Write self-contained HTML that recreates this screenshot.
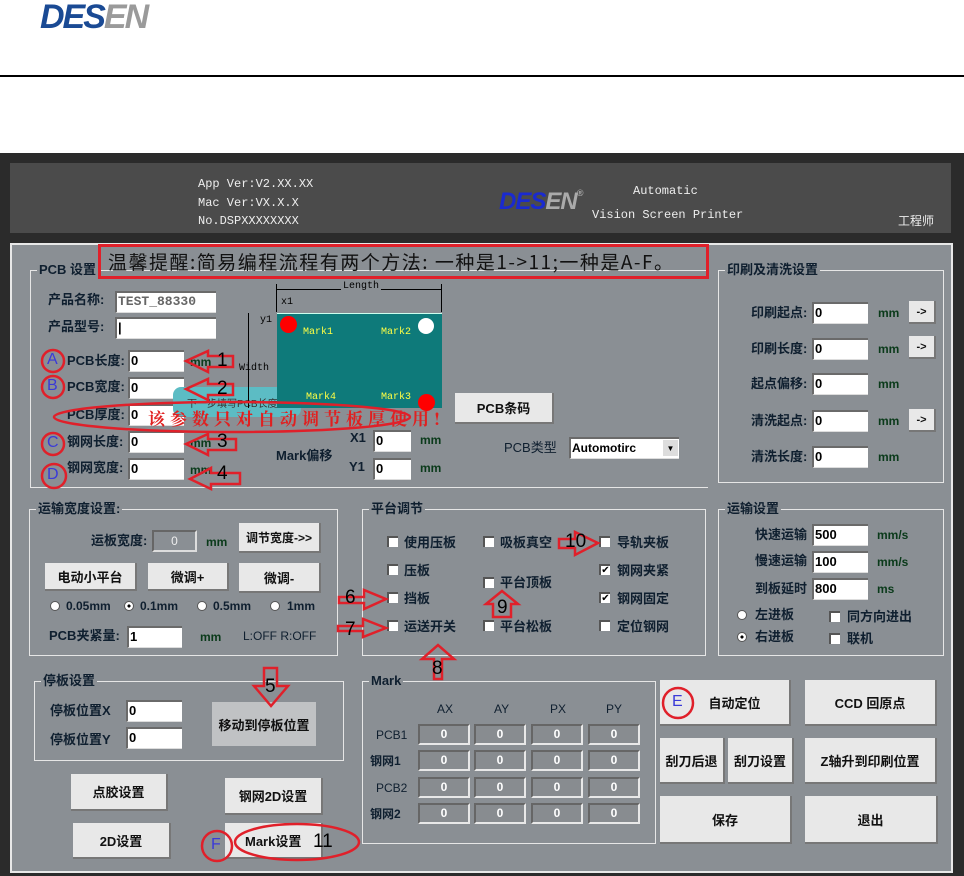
<!DOCTYPE html>
<html><head><meta charset="utf-8"><style>
*{margin:0;padding:0;box-sizing:border-box}
body{width:964px;height:876px;background:#fff;position:relative;overflow:hidden;font-family:"Liberation Sans","Noto Sans CJK SC",sans-serif}
.a{position:absolute;white-space:nowrap}
.l{position:absolute;white-space:nowrap;font-size:13px;font-weight:bold;color:#0f1f2f;line-height:16px}
.in{position:absolute;background:#fff;border-top:2px solid #6a6a6a;border-left:2px solid #6a6a6a;border-bottom:1px solid #ddd;font-size:13px;font-weight:bold;line-height:18px;padding-left:1px;color:#000}
.bt{position:absolute;background:#e8e8e8;border-right:2px solid #777;border-bottom:2px solid #777;font-size:13px;font-weight:bold;color:#111;display:flex;align-items:center;justify-content:center}
.g{position:absolute;border:1px solid #e6e6e6}
.gt{position:absolute;top:-9px;left:6px;background:#8a8f94;font-size:13px;font-weight:bold;color:#0f1f2f;padding:0 2px;line-height:16px}
.cb{position:absolute;width:11px;height:11px;background:#fff;border-top:2px solid #555;border-left:2px solid #555;font-size:10px;line-height:9px;text-align:center}
.rd{position:absolute;width:10px;height:10px;border-radius:50%;background:#fff;border:1px solid #555}
.mm{position:absolute;font-size:12px;font-weight:bold;color:#0a3a1a}
.cell{position:absolute;width:52px;height:21px;background:#888c90;border:2px solid #e8e8e8;border-top-color:#666;border-left-color:#666;text-align:center;font-size:12px;font-weight:bold;color:#fff;line-height:17px}
.mono{font-family:"Liberation Mono","Noto Sans CJK SC",monospace;color:#eee;font-size:12px}
.n{position:absolute;font-size:19px;color:#000}
</style></head><body>
<div class="a" style="left:40px;top:-2px;font:italic 900 34px 'Liberation Sans',sans-serif;letter-spacing:-2px;color:#1a4a94">DES<span style="color:#9a9a9a">EN</span></div>
<div class="a" style="left:0;top:75px;width:964px;height:2px;background:#000"></div>
<div class="a" style="left:0;top:153px;width:964px;height:723px;background:#2b2b2b"></div>
<div class="a" style="left:10px;top:163px;width:941px;height:70px;background:#4b4b4b"></div>
<div class="a mono" style="left:198px;top:175px;line-height:18.5px">App Ver:V2.XX.XX<br>Mac Ver:VX.X.X<br>No.DSPXXXXXXXX</div>
<div class="a" style="left:499px;top:188px;font:italic 900 24px 'Liberation Sans',sans-serif;letter-spacing:-1px;color:#1a2ad0">DES<span style="color:#aaa">EN</span><span style="font-size:9px;color:#aaa;vertical-align:top">®</span></div>
<div class="a mono" style="left:633px;top:184px">Automatic</div>
<div class="a mono" style="left:592px;top:208px">Vision Screen Printer</div>
<div class="a" style="left:898px;top:212px;color:#eee;font-size:12px">工程师</div>
<div class="a" style="left:10px;top:243px;width:943px;height:630px;background:#8a8f94;border:2px solid #e8e8e8"></div>

<div class="g" style="left:30px;top:270px;width:678px;height:218px;border-right:none"><div class="gt">PCB 设置</div></div>
<div class="l" style="left:48px;top:292px">产品名称:</div><div class="in" style="left:115px;top:291px;width:101px;height:22px;color:#666;font-family:'Liberation Mono',monospace">TEST_88330</div>
<div class="l" style="left:48px;top:319px">产品型号:</div><div class="in" style="left:115px;top:317px;width:101px;height:22px">|</div>
<div class="l" style="left:67px;top:353px">PCB长度:</div><div class="in" style="left:128px;top:350px;width:56px;height:22px">0</div>
<div class="l" style="left:67px;top:379px">PCB宽度:</div><div class="in" style="left:128px;top:377px;width:56px;height:22px">0</div>
<div class="l" style="left:67px;top:407px">PCB厚度:</div><div class="in" style="left:128px;top:404px;width:56px;height:22px">0</div>
<div class="l" style="left:67px;top:434px">钢网长度:</div><div class="in" style="left:128px;top:431px;width:56px;height:22px">0</div>
<div class="l" style="left:67px;top:460px">钢网宽度:</div><div class="in" style="left:128px;top:458px;width:56px;height:22px">0</div>
<div class="mm" style="left:190px;top:355px">mm</div><div class="mm" style="left:190px;top:436px">mm</div><div class="mm" style="left:190px;top:463px">mm</div>
<div class="a" style="left:173px;top:387px;width:128px;height:30px;background:#5cbcc4;border-radius:8px;font-size:10px;color:#333;padding:8px 0 0 14px">下一步填写PCB长度</div>
<div class="a" style="left:277px;top:313px;width:165px;height:95px;background:#0e7a7a;border-top:1px solid #cfe"></div>
<div class="a" style="left:276px;top:289px;width:166px;height:1px;background:#000"></div>
<div class="a" style="left:276px;top:284px;width:1px;height:28px;background:#000"></div>
<div class="a" style="left:441px;top:284px;width:1px;height:28px;background:#000"></div>
<div class="a" style="left:248px;top:313px;width:1px;height:95px;background:#000"></div>
<div class="a" style="left:341px;top:281px;background:#8a8f94;font-size:10px;font-family:'Liberation Mono',monospace;padding:0 2px">Length</div>
<div class="a" style="left:281px;top:297px;font-size:10px;font-family:'Liberation Mono',monospace">x1</div>
<div class="a" style="left:260px;top:315px;font-size:10px;font-family:'Liberation Mono',monospace">y1</div>
<div class="a" style="left:239px;top:363px;font-size:10px;font-family:'Liberation Mono',monospace">Width</div>
<div class="a" style="left:280px;top:316px;width:17px;height:17px;border-radius:50%;background:#f00"></div>
<div class="a" style="left:418px;top:318px;width:16px;height:16px;border-radius:50%;background:#fff"></div>
<div class="a" style="left:418px;top:394px;width:17px;height:17px;border-radius:50%;background:#f00"></div>
<div class="a" style="left:303px;top:327px;font-size:10px;color:#ff4;font-family:'Liberation Mono',monospace">Mark1</div>
<div class="a" style="left:381px;top:327px;font-size:10px;color:#ff4;font-family:'Liberation Mono',monospace">Mark2</div>
<div class="a" style="left:306px;top:392px;font-size:10px;color:#ff4;font-family:'Liberation Mono',monospace">Mark4</div>
<div class="a" style="left:381px;top:392px;font-size:10px;color:#ff4;font-family:'Liberation Mono',monospace">Mark3</div>
<div class="bt" style="left:455px;top:393px;width:99px;height:31px">PCB条码</div>
<div class="l" style="left:350px;top:430px">X1</div><div class="in" style="left:373px;top:430px;width:38px;height:22px">0</div><div class="mm" style="left:420px;top:433px">mm</div>
<div class="l" style="left:349px;top:459px">Y1</div><div class="in" style="left:373px;top:458px;width:38px;height:22px">0</div><div class="mm" style="left:420px;top:461px">mm</div>
<div class="l" style="left:276px;top:448px">Mark偏移</div>
<div class="l" style="left:504px;top:440px;font-weight:normal">PCB类型</div>
<div class="in" style="left:569px;top:437px;width:110px;height:22px;font-size:12px">Automotirc<span style="position:absolute;right:1px;top:1px;width:15px;height:16px;background:#ddd;font-size:8px;text-align:center">▼</span></div>

<div class="g" style="left:718px;top:270px;width:226px;height:213px"><div class="gt">印刷及清洗设置</div></div>
<div class="l" style="left:751px;top:305px">印刷起点:</div><div class="in" style="left:812px;top:302px;width:56px;height:22px">0</div><div class="mm" style="left:878px;top:306px">mm</div><div class="bt" style="left:909px;top:301px;width:27px;height:23px;font-size:11px">-&gt;</div>
<div class="l" style="left:751px;top:341px">印刷长度:</div><div class="in" style="left:812px;top:338px;width:56px;height:22px">0</div><div class="mm" style="left:878px;top:342px">mm</div><div class="bt" style="left:909px;top:336px;width:27px;height:23px;font-size:11px">-&gt;</div>
<div class="l" style="left:751px;top:376px">起点偏移:</div><div class="in" style="left:812px;top:373px;width:56px;height:22px">0</div><div class="mm" style="left:878px;top:377px">mm</div>
<div class="l" style="left:751px;top:413px">清洗起点:</div><div class="in" style="left:812px;top:410px;width:56px;height:22px">0</div><div class="mm" style="left:878px;top:414px">mm</div><div class="bt" style="left:909px;top:409px;width:27px;height:23px;font-size:11px">-&gt;</div>
<div class="l" style="left:751px;top:449px">清洗长度:</div><div class="in" style="left:812px;top:446px;width:56px;height:22px">0</div><div class="mm" style="left:878px;top:450px">mm</div>

<div class="g" style="left:29px;top:509px;width:309px;height:147px"><div class="gt">运输宽度设置:</div></div>
<div class="l" style="left:91px;top:533px">运板宽度:</div><div class="a" style="left:152px;top:530px;width:45px;height:22px;border:2px solid #ddd;border-top-color:#666;border-left-color:#666;color:#eee;font-size:12px;text-align:center;line-height:18px">0</div><div class="mm" style="left:206px;top:535px">mm</div>
<div class="bt" style="left:239px;top:523px;width:82px;height:30px;font-size:12px">调节宽度-&gt;&gt;</div>
<div class="bt" style="left:45px;top:563px;width:92px;height:28px">电动小平台</div>
<div class="bt" style="left:148px;top:563px;width:81px;height:28px">微调+</div>
<div class="bt" style="left:239px;top:563px;width:82px;height:30px">微调-</div>
<div class="rd" style="left:50px;top:601px"></div><div class="l" style="left:66px;top:598px;font-size:12px">0.05mm</div>
<div class="rd" style="left:124px;top:601px;background:radial-gradient(#000 25%,#fff 30%)"></div><div class="l" style="left:140px;top:598px;font-size:12px">0.1mm</div>
<div class="rd" style="left:197px;top:601px"></div><div class="l" style="left:213px;top:598px;font-size:12px">0.5mm</div>
<div class="rd" style="left:270px;top:601px"></div><div class="l" style="left:287px;top:598px;font-size:12px">1mm</div>
<div class="l" style="left:49px;top:628px">PCB夹紧量:</div><div class="in" style="left:127px;top:626px;width:55px;height:22px">1</div><div class="mm" style="left:200px;top:630px">mm</div>
<div class="l" style="left:243px;top:628px;font-weight:normal;font-size:12px">L:OFF R:OFF</div>

<div class="g" style="left:362px;top:509px;width:344px;height:147px"><div class="gt">平台调节</div></div>
<div class="cb" style="left:387px;top:536px"></div><div class="l" style="left:404px;top:535px">使用压板</div>
<div class="cb" style="left:387px;top:564px"></div><div class="l" style="left:404px;top:563px">压板</div>
<div class="cb" style="left:387px;top:592px"></div><div class="l" style="left:404px;top:591px">挡板</div>
<div class="cb" style="left:387px;top:620px"></div><div class="l" style="left:404px;top:619px">运送开关</div>
<div class="cb" style="left:483px;top:536px"></div><div class="l" style="left:500px;top:535px">吸板真空</div>
<div class="cb" style="left:483px;top:577px"></div><div class="l" style="left:500px;top:575px">平台顶板</div>
<div class="cb" style="left:483px;top:620px"></div><div class="l" style="left:500px;top:619px">平台松板</div>
<div class="cb" style="left:599px;top:536px"></div><div class="l" style="left:617px;top:535px">导轨夹板</div>
<div class="cb" style="left:599px;top:564px">✔</div><div class="l" style="left:617px;top:563px">钢网夹紧</div>
<div class="cb" style="left:599px;top:592px">✔</div><div class="l" style="left:617px;top:591px">钢网固定</div>
<div class="cb" style="left:599px;top:620px"></div><div class="l" style="left:617px;top:619px">定位钢网</div>

<div class="g" style="left:718px;top:509px;width:226px;height:147px"><div class="gt">运输设置</div></div>
<div class="l" style="left:755px;top:527px">快速运输</div><div class="in" style="left:812px;top:524px;width:56px;height:22px">500</div><div class="mm" style="left:877px;top:528px">mm/s</div>
<div class="l" style="left:755px;top:553px">慢速运输</div><div class="in" style="left:812px;top:551px;width:56px;height:22px">100</div><div class="mm" style="left:877px;top:555px">mm/s</div>
<div class="l" style="left:755px;top:581px">到板延时</div><div class="in" style="left:812px;top:578px;width:56px;height:22px">800</div><div class="mm" style="left:877px;top:582px">ms</div>
<div class="rd" style="left:737px;top:610px"></div><div class="l" style="left:755px;top:607px">左进板</div>
<div class="rd" style="left:737px;top:632px;background:radial-gradient(#000 25%,#fff 30%)"></div><div class="l" style="left:755px;top:629px">右进板</div>
<div class="cb" style="left:829px;top:611px"></div><div class="l" style="left:847px;top:609px">同方向进出</div>
<div class="cb" style="left:829px;top:633px"></div><div class="l" style="left:847px;top:631px">联机</div>

<div class="g" style="left:34px;top:681px;width:310px;height:80px"><div class="gt">停板设置</div></div>
<div class="l" style="left:50px;top:703px">停板位置X</div><div class="in" style="left:126px;top:700px;width:56px;height:22px">0</div>
<div class="l" style="left:50px;top:732px">停板位置Y</div><div class="in" style="left:126px;top:727px;width:56px;height:22px">0</div>
<div class="bt" style="left:212px;top:702px;width:104px;height:44px;background:#c0c2c4;border:none">移动到停板位置</div>

<div class="g" style="left:362px;top:681px;width:294px;height:163px"><div class="gt" style="top:-9px">Mark</div></div>
<div class="l" style="left:437px;top:701px;font-weight:normal;font-size:12px">AX</div>
<div class="l" style="left:494px;top:701px;font-weight:normal;font-size:12px">AY</div>
<div class="l" style="left:550px;top:701px;font-weight:normal;font-size:12px">PX</div>
<div class="l" style="left:606px;top:701px;font-weight:normal;font-size:12px">PY</div>
<div class="l" style="left:376px;top:727px;font-weight:normal;font-size:12px">PCB1</div>
<div class="l" style="left:370px;top:753px;font-size:12px">钢网1</div>
<div class="l" style="left:376px;top:780px;font-weight:normal;font-size:12px">PCB2</div>
<div class="l" style="left:370px;top:806px;font-size:12px">钢网2</div>
<div class="cell" style="left:418px;top:724px">0</div><div class="cell" style="left:474px;top:724px">0</div><div class="cell" style="left:531px;top:724px">0</div><div class="cell" style="left:588px;top:724px">0</div>
<div class="cell" style="left:418px;top:750px">0</div><div class="cell" style="left:474px;top:750px">0</div><div class="cell" style="left:531px;top:750px">0</div><div class="cell" style="left:588px;top:750px">0</div>
<div class="cell" style="left:418px;top:777px">0</div><div class="cell" style="left:474px;top:777px">0</div><div class="cell" style="left:531px;top:777px">0</div><div class="cell" style="left:588px;top:777px">0</div>
<div class="cell" style="left:418px;top:803px">0</div><div class="cell" style="left:474px;top:803px">0</div><div class="cell" style="left:531px;top:803px">0</div><div class="cell" style="left:588px;top:803px">0</div>

<div class="bt" style="left:660px;top:680px;width:131px;height:46px;padding-left:20px">自动定位</div>
<div class="bt" style="left:805px;top:680px;width:132px;height:46px">CCD 回原点</div>
<div class="bt" style="left:660px;top:738px;width:65px;height:46px">刮刀后退</div>
<div class="bt" style="left:728px;top:738px;width:66px;height:46px">刮刀设置</div>
<div class="bt" style="left:805px;top:738px;width:132px;height:46px">Z轴升到印刷位置</div>
<div class="bt" style="left:660px;top:796px;width:132px;height:48px">保存</div>
<div class="bt" style="left:805px;top:796px;width:133px;height:48px">退出</div>
<div class="bt" style="left:71px;top:774px;width:97px;height:37px">点胶设置</div>
<div class="bt" style="left:73px;top:823px;width:98px;height:36px">2D设置</div>
<div class="bt" style="left:225px;top:778px;width:98px;height:37px">钢网2D设置</div>
<div class="bt" style="left:225px;top:823px;width:98px;height:36px;justify-content:flex-start;padding-left:20px">Mark设置</div>

<div class="a" style="left:98px;top:244px;width:611px;height:35px;border:3px solid #e0202a"></div>
<div class="a" style="left:108px;top:248px;font-size:19px;color:#111;font-family:'Noto Sans CJK SC',sans-serif;letter-spacing:1.5px">温馨提醒:简易编程流程有两个方法: 一种是1-&gt;11;一种是A-F。</div>
<div class="a" style="left:148px;top:405px;font-size:17px;font-weight:bold;color:#e02020;font-family:'Noto Serif CJK SC',serif;letter-spacing:5px">该参数只对自动调节板厚使用!</div>
<svg class="a" style="left:0;top:0" width="964" height="876" fill="none" stroke="#e0202a" stroke-width="2.5">
<ellipse cx="53" cy="361" rx="11" ry="11"/><ellipse cx="53" cy="387" rx="11" ry="11"/><ellipse cx="53" cy="444" rx="11" ry="11"/><ellipse cx="54" cy="476" rx="12" ry="12"/>
<ellipse cx="232" cy="417" rx="178" ry="15"/>
<ellipse cx="678" cy="703" rx="15" ry="15"/><ellipse cx="217" cy="846" rx="15" ry="15"/><ellipse cx="297" cy="842" rx="62" ry="18"/>
<path d="M186 361 L208 351 L208 356 L233 356 L233 367 L208 367 L208 372 Z"/>
<path d="M186 389 L208 379 L208 384 L233 384 L233 395 L208 395 L208 400 Z"/>
<path d="M186 444 L208 434 L208 439 L236 439 L236 450 L208 450 L208 455 Z"/>
<path d="M190 479 L211 468 L211 473 L240 473 L240 484 L211 484 L211 489 Z"/>
<path d="M264 668 L277 668 L277 686 L288 686 L271 706 L254 686 L264 686 Z"/>
<path d="M339 597 L364 597 L364 590 L386 599 L364 609 L364 603 L339 603 Z"/>
<path d="M338 626 L363 626 L363 619 L386 628 L363 637 L363 631 L338 631 Z"/>
<path d="M434 679 L434 659 L422 659 L438 645 L454 659 L442 659 L442 679 Z"/>
<path d="M493 617 L493 604 L486 604 L502 591 L518 604 L511 604 L511 617 Z"/>
<path d="M559 539 L575 539 L575 532 L598 543 L575 555 L575 548 L559 548 Z"/>
</svg>
<div class="n" style="left:217px;top:350px">1</div><div class="n" style="left:217px;top:378px">2</div>
<div class="n" style="left:217px;top:431px">3</div><div class="n" style="left:217px;top:463px">4</div>
<div class="n" style="left:265px;top:676px">5</div><div class="n" style="left:345px;top:587px">6</div>
<div class="n" style="left:345px;top:619px">7</div><div class="n" style="left:432px;top:658px">8</div>
<div class="n" style="left:497px;top:597px">9</div><div class="n" style="left:565px;top:531px">10</div>
<div class="n" style="left:313px;top:831px">11</div>
<div class="a" style="left:47px;top:351px;color:#3a3ad8;font-size:16px">A</div><div class="a" style="left:47px;top:377px;color:#3a3ad8;font-size:16px">B</div>
<div class="a" style="left:47px;top:434px;color:#3a3ad8;font-size:16px">C</div><div class="a" style="left:47px;top:466px;color:#3a3ad8;font-size:16px">D</div>
<div class="a" style="left:672px;top:693px;color:#3a3ad8;font-size:16px">E</div><div class="a" style="left:211px;top:836px;color:#3a3ad8;font-size:16px">F</div>
</body></html>
